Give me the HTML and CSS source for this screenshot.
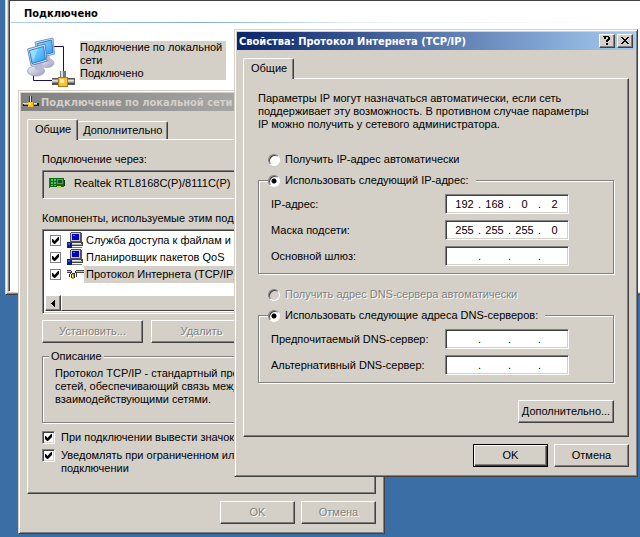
FILE: index.html
```html
<!DOCTYPE html>
<html lang="ru">
<head>
<meta charset="utf-8">
<title>Подключение по локальной сети</title>
<link rel="stylesheet" href="styles.css">
</head>
<body>
<main class="desktop">
  <section class="folder">
    <div class="folder-view">
      <h1 class="group-title">Подключено</h1>
      <div class="connection">
        <svg class="connection-icon" width="50" height="50" viewBox="0 0 50 50" aria-hidden="true">
          <defs>
            <linearGradient id="screen" x1="0" y1="0" x2="1" y2="1">
              <stop offset="0" stop-color="#8fd8ff"/><stop offset=".5" stop-color="#5cc0fb"/><stop offset="1" stop-color="#2f93ee"/>
            </linearGradient>
            <linearGradient id="stand" x1="0" y1="0" x2="1" y2="1">
              <stop offset="0" stop-color="#f4f4fb"/><stop offset="1" stop-color="#9a9bc0"/>
            </linearGradient>
            <linearGradient id="pipe" x1="0" y1="0" x2="0" y2="1">
              <stop offset="0" stop-color="#777"/><stop offset=".35" stop-color="#eee"/><stop offset="1" stop-color="#333"/>
            </linearGradient>
          </defs>
          <path d="M26 9.500H36.500V34M6.500 36V43.500H27" fill="none" stroke="#1a0f5c"/>
          <ellipse cx="20" cy="26" rx="7" ry="4.500" fill="url(#stand)" stroke="#a4a5c0" stroke-width=".8"/>
          <path d="M17 19l5-1 2 7h-7z" fill="#b5b6d0"/>
          <path d="M8 5L26 1L27.500 17L11 21Z" fill="#d4e2f4" stroke="#5d83b4" stroke-width=".8"/>
          <path d="M10 6.500L24.500 3L26 15.500L12 19Z" fill="url(#screen)" stroke="#1c67bd" stroke-width=".8"/>
          <ellipse cx="9" cy="34" rx="8.500" ry="5" fill="url(#stand)" stroke="#9596b8" stroke-width=".8"/>
          <path d="M7 26l8-2 2 8q-4 4-9 0z" fill="#b9bad6"/>
          <path d="M0.500 12L18 7L20 24L4 28.500Z" fill="#d4e2f4" stroke="#5576a4" stroke-width=".8"/>
          <path d="M2.500 13.500L16.500 9.500L18.500 22.500L5 26.500Z" fill="url(#screen)" stroke="#1c67bd" stroke-width=".8"/>
          <path d="M3 14l8-2.500-5 13z" fill="#b8e8ff" opacity=".6"/>
          <rect x="33" y="34" width="6" height="9" fill="#777"/><rect x="34" y="34" width="2" height="9" fill="#ddd"/>
          <rect x="25" y="41" width="23" height="7" fill="#555"/><rect x="25" y="42" width="22" height="5" fill="url(#pipe)"/>
          <rect x="31.500" y="40.500" width="9" height="9" fill="#f6c433" stroke="#a97b10"/><rect x="33" y="42" width="4" height="4" fill="#ffe99a"/>
        </svg>
        <p class="connection-label">Подключение по локальной<br>сети<br>Подключено</p>
      </div>
    </div>
  </section>

  <section class="window window-back" aria-label="Подключение по локальной сети">
    <header class="titlebar titlebar-inactive">
      <svg width="16" height="16" viewBox="0 0 16 16" shape-rendering="crispEdges" aria-hidden="true">
        <rect x="6" y="2" width="3" height="8" fill="#333"/><rect x="7" y="2" width="1" height="7" fill="#eee"/>
        <rect x="0" y="9" width="16" height="3" fill="#222"/><rect x="0" y="9" width="14" height="1" fill="#ddd"/><rect x="1" y="10" width="13" height="1" fill="#999"/>
        <rect x="5" y="8" width="6" height="6" fill="#b87a08"/><rect x="5" y="8" width="5" height="5" fill="#f8bf25"/><rect x="6" y="9" width="2" height="2" fill="#ffeaa0"/>
      </svg>
      <h2>Подключение по локальной сети</h2>
    </header>
    <div class="window-body">
      <div class="tabs" role="tablist">
        <button class="tab tab-active" role="tab" aria-selected="true">Общие</button>
        <button class="tab" role="tab" aria-selected="false">Дополнительно</button>
      </div>
      <div class="panel panel-connection">
        <p class="line">Подключение через:</p>
        <div class="adapter">
          <svg width="16" height="12" viewBox="0 0 16 12" shape-rendering="crispEdges" aria-hidden="true">
            <rect x="0" y="1" width="15" height="9" fill="#0b6b1c"/><rect x="0" y="1" width="1" height="10" fill="#555"/>
            <path d="M2 2h2v2h-2zM5 2h2v2h-2zM2 5h2v2h-2zM5 5h2v2h-2zM2 8h2v1h-2zM5 8h2v1h-2z" fill="#45c455"/>
            <path d="M8 2h6v5h-6z" fill="#5f9a5c"/><path d="M9 3h4v3h-4z" fill="#174f20"/><path d="M8 9h4v2h-4z" fill="#f3c52c"/><rect x="15" y="3" width="1" height="6" fill="#063d0d"/>
          </svg>
          <span>Realtek RTL8168C(P)/8111C(P) Family</span>
        </div>
        <p class="line">Компоненты, используемые этим подключением:</p>
        <div class="list">
          <label class="list-row"><input type="checkbox" class="check check-flat" checked>
            <svg class="row-icon" width="17" height="17" viewBox="0 0 17 17" shape-rendering="crispEdges" aria-hidden="true"><use href="#pc"/></svg>
            <span>Служба доступа к файлам и принтерам</span></label>
          <label class="list-row"><input type="checkbox" class="check check-flat" checked>
            <svg class="row-icon" width="17" height="17" viewBox="0 0 17 17" shape-rendering="crispEdges" aria-hidden="true">
              <g id="pc"><path d="M4 0h10v1h1v9h-12v-9h1z" fill="#555"/><path d="M4 1h9v8h-9z" fill="#c8c8c8"/><path d="M5 2h7v6h-7z" fill="#0000c8"/><path d="M6 3h2v1h-2z" fill="#4a7cff"/><path d="M3 10h12l1 1v3h-14v-3z" fill="#444"/><path d="M4 11h10v1h-10z" fill="#eee"/><path d="M4 12h11v1h-11z" fill="#aaa"/><path d="M0 10h3v1h2v5h-5z" fill="#0a1c8c"/><path d="M1 11h2v2h-2z" fill="#2c56e8"/><path d="M5 15h10v1h-10z" fill="#777"/></g>
            </svg>
            <span>Планировщик пакетов QoS</span></label>
          <label class="list-row list-row-selected"><input type="checkbox" class="check check-flat" checked>
            <svg class="row-icon" width="17" height="17" viewBox="0 0 17 17" shape-rendering="crispEdges" aria-hidden="true">
              <path d="M0 4h4v3h-4zM9 4h8v3h-8z" fill="#444"/><path d="M0 5h4v1h-4zM9 5h8v1h-8z" fill="#c4c4c4"/>
              <path d="M4 5h1v2h-1zM8 5h1v2h-1zM3 7h1v1h-1zM5 7h3v1h-3zM9 7h1v1h-1zM2 8h1v3h-1zM9 8h1v3h-1zM4 8h1v4h-1zM7 8h1v4h-1z" fill="#333"/>
              <path d="M5 8h2v5h-2z" fill="#b9a31c"/><path d="M5 9h1v2h-1z" fill="#fff17a"/>
            </svg>
            <span>Протокол Интернета (TCP/IP)</span></label>
          <div class="scrollbar">
            <button class="scroll-arrow" aria-label="Прокрутить влево"><svg width="5" height="7" viewBox="0 0 5 7" shape-rendering="crispEdges" aria-hidden="true"><path d="M4 0v7H3V6H2V5H1V4H0V3H1V2H2V1H3V0z"/></svg></button>
            <div class="scroll-thumb"></div>
          </div>
        </div>
        <div class="actions">
          <button class="btn" disabled>Установить...</button>
          <button class="btn" disabled>Удалить</button>
        </div>
        <fieldset class="group group-description">
          <legend>Описание</legend>
          <p>Протокол TCP/IP - стандартный протокол<br>сетей, обеспечивающий связь между<br>взаимодействующими сетями.</p>
        </fieldset>
        <label class="option"><input type="checkbox" class="check" checked><span>При подключении вывести значок в области</span></label>
        <label class="option"><input type="checkbox" class="check" checked><span>Уведомлять при ограниченном или<br>подключении</span></label>
      </div>
      <footer class="buttons">
        <button class="btn" disabled>OK</button>
        <button class="btn" disabled>Отмена</button>
      </footer>
    </div>
  </section>

  <section class="window window-front" role="dialog" aria-label="Свойства: Протокол Интернета (TCP/IP)">
    <header class="titlebar">
      <h2>Свойства: Протокол Интернета (TCP/IP)</h2>
      <button class="caption-btn" aria-label="Справка"><svg width="8" height="9" viewBox="0 0 8 9" shape-rendering="crispEdges" aria-hidden="true"><path d="M1 0h5v1h1v3h-1v1h-1v1h-2v-2h1v-1h1v-2h-2v2h-2v-2h-1v-1h1zM3 7h2v2h-2z"/></svg></button>
      <button class="caption-btn" aria-label="Закрыть"><svg width="8" height="7" viewBox="0 0 8 7" shape-rendering="crispEdges" aria-hidden="true"><path d="M0 0h2v1h1v1h2v-1h1v-1h2v1h-1v1h-1v1h-1v1h1v1h1v1h1v1h-2v-1h-1v-1h-2v1h-1v1h-2v-1h1v-1h1v-1h1v-1h-1v-1h-1v-1h-1z"/></svg></button>
    </header>
    <div class="window-body">
      <div class="tabs" role="tablist">
        <button class="tab tab-active" role="tab" aria-selected="true">Общие</button>
      </div>
      <div class="panel panel-ip">
        <p class="intro">Параметры IP могут назначаться автоматически, если сеть<br>поддерживает эту возможность. В противном случае параметры<br>IP можно получить у сетевого администратора.</p>
        <label class="choice"><input type="radio" class="radio" name="ip"><span>Получить IP-адрес автоматически</span></label>
        <fieldset class="group group-choice">
          <legend><label class="choice"><input type="radio" class="radio" name="ip" checked><span>Использовать следующий IP-адрес:</span></label></legend>
          <div class="field"><label for="ip1">IP-адрес:</label>
            <div class="ip"><input id="ip1" value="192"><i>.</i><input aria-label="Октет 2" value="168"><i>.</i><input aria-label="Октет 3" value="0"><i>.</i><input aria-label="Октет 4" value="2"></div></div>
          <div class="field"><label for="mask1">Маска подсети:</label>
            <div class="ip"><input id="mask1" value="255"><i>.</i><input aria-label="Октет 2" value="255"><i>.</i><input aria-label="Октет 3" value="255"><i>.</i><input aria-label="Октет 4" value="0"></div></div>
          <div class="field"><label for="gate1">Основной шлюз:</label>
            <div class="ip"><input id="gate1"><i>.</i><input aria-label="Октет 2"><i>.</i><input aria-label="Октет 3"><i>.</i><input aria-label="Октет 4"></div></div>
        </fieldset>
        <label class="choice choice-disabled"><input type="radio" class="radio" name="dns" disabled><span>Получить адрес DNS-сервера автоматически</span></label>
        <fieldset class="group group-choice">
          <legend><label class="choice"><input type="radio" class="radio" name="dns" checked><span>Использовать следующие адреса DNS-серверов:</span></label></legend>
          <div class="field"><label for="dns1">Предпочитаемый DNS-сервер:</label>
            <div class="ip"><input id="dns1"><i>.</i><input aria-label="Октет 2"><i>.</i><input aria-label="Октет 3"><i>.</i><input aria-label="Октет 4"></div></div>
          <div class="field"><label for="dns2">Альтернативный DNS-сервер:</label>
            <div class="ip"><input id="dns2"><i>.</i><input aria-label="Октет 2"><i>.</i><input aria-label="Октет 3"><i>.</i><input aria-label="Октет 4"></div></div>
        </fieldset>
        <div class="more"><button class="btn btn-wide">Дополнительно...</button></div>
      </div>
      <footer class="buttons">
        <button class="btn btn-default">OK</button>
        <button class="btn">Отмена</button>
      </footer>
    </div>
  </section>
</main>
</body>
</html>
```
FILE: styles.css
```css
* { box-sizing: border-box; }

html, body { height: 100%; }

body {
  margin: 0;
  background: #3a6ea5;
  color: #000;
  font: 11px/13px "Liberation Sans", Arial, sans-serif;
}

h1, h2, p { margin: 0; font-size: inherit; }

button, input { font: inherit; color: inherit; }

.desktop {
  position: relative;
  min-height: 100%;
  overflow: hidden;
}

/* Folder window behind the dialogs */
.folder {
  position: absolute;
  top: -4px;
  left: 5px;
  right: -4px;
  padding: 2px;
  background: #d4d0c8;
  border: 1px solid #d4d0c8;
  border-right-color: #404040;
  border-bottom-color: #404040;
  box-shadow: inset 1px 1px #fff, inset -1px -1px #808080;
}

.folder-view {
  min-height: 293px;
  background: #fff;
  border: 1px solid #808080;
  border-color: #808080 #fff #fff #808080;
  box-shadow: inset 1px 1px #404040;
  padding: 7px 0 0 2px;
}

.group-title {
  padding: 0 0 2px 13px;
  height: 16px;
  font: bold 11px/13px "DejaVu Sans Condensed", "Noto Sans", sans-serif;
  border-bottom: 1px solid;
  border-image: linear-gradient(to right, #b4cdea, #7ba9dc 30%, #e8f1fb 55%, #fff) 1;
}

.connection {
  display: flex;
  align-items: flex-start;
  gap: 3px;
  padding: 14px 0 0 16px;
}

.connection-label {
  margin-top: 4px;
  width: 146px;
  background: #d4d0c8;
  white-space: nowrap;
}

/* Dialog windows */
.window {
  position: absolute;
  padding: 2px;
  background: #d4d0c8;
  border: 1px solid #d4d0c8;
  border-right-color: #404040;
  border-bottom-color: #404040;
  box-shadow: inset 1px 1px #fff, inset -1px -1px #808080;
  white-space: nowrap;
}

.window-back { left: 18px; top: 90px; width: 367px; }
.window-front { left: 234px; top: 29px; right: 2px; }

.titlebar {
  display: flex;
  align-items: center;
  gap: 2px;
  height: 18px;
  padding: 0 2px;
  color: #fff;
  background: linear-gradient(to right, #0a246a, #a6caf0);
}

.titlebar-inactive {
  color: #d4d0c8;
  background: linear-gradient(to right, #808080, #c0c0c0);
}

.titlebar h2 {
  flex: 1;
  font: bold 11px/13px "DejaVu Sans Condensed", "Noto Sans", sans-serif;
}

.caption-btn {
  display: grid;
  place-items: center;
  width: 16px;
  height: 14px;
  padding: 0 1px 1px 0;
}

.btn, .caption-btn, .scroll-arrow {
  background: #d4d0c8;
  border: 1px solid;
  border-color: #fff #404040 #404040 #fff;
  box-shadow: inset -1px -1px #808080;
}

.window-body { padding: 8px 6px 7px; }

.tabs {
  display: flex;
  align-items: flex-end;
  height: 20px;
}

.tab {
  height: 18px;
  padding: 0 5px;
  background: #d4d0c8;
  border: 1px solid;
  border-color: #fff #404040 #fff #fff;
  border-width: 1px 1px 0 0;
  border-radius: 2px 2px 0 0;
  box-shadow: inset -1px 0 #808080;
}

.tab-active {
  position: relative;
  height: 21px;
  margin-bottom: -1px;
  padding: 0 6px 2px 7px;
  border-width: 1px 1px 0 1px;
}

.panel {
  border: 1px solid;
  border-color: #fff #404040 #404040 #fff;
  box-shadow: inset -1px -1px #808080;
}

.buttons {
  display: flex;
  justify-content: flex-end;
  gap: 6px;
  padding-top: 7px;
}

.btn {
  width: 75px;
  height: 23px;
  padding: 0 0 1px;
}

.btn:disabled { color: #808080; text-shadow: 1px 1px #fff; }
.btn-wide { width: 96px; }

.btn-default {
  border-color: #000;
  box-shadow: inset 1px 1px #fff, inset -1px -1px #404040, inset -2px -2px #808080;
}

/* Check boxes and radio buttons */
.check {
  appearance: none;
  flex: none;
  width: 13px;
  height: 13px;
  margin: 0;
  background: #fff;
  border: 1px solid;
  border-color: #808080 #fff #fff #808080;
  box-shadow: inset 1px 1px #404040, inset -1px -1px #d4d0c8;
}

.check:checked::before {
  content: "";
  display: block;
  width: 7px;
  height: 7px;
  margin: 2px;
  background: #000;
  clip-path: polygon(0 29%, 0 72%, 29% 100%, 43% 100%, 100% 43%, 100% 0, 86% 0, 36% 58%, 14% 29%);
}

.check-flat {
  width: 11px;
  height: 11px;
  border-color: #808080;
  box-shadow: none;
}

.check-flat:checked::before { margin: 1px; }

.radio {
  appearance: none;
  flex: none;
  width: 12px;
  height: 12px;
  margin: 0;
  background: #fff;
  border: 1px solid;
  border-color: #808080 #fff #fff #808080;
  border-radius: 50%;
  box-shadow: inset 1px 1px #404040;
}

.radio:checked { background: radial-gradient(circle at 5px 5px, #000 2px, #fff 3px); }
.radio:disabled { background: #d4d0c8; }

.choice {
  display: flex;
  align-items: center;
  gap: 5px;
}

.choice-disabled { color: #808080; text-shadow: 1px 1px #fff; }

.group {
  min-width: 0;
  margin: 0;
  padding: 0;
  border: 1px solid #808080;
  box-shadow: 1px 1px #fff, inset 1px 1px #fff;
}

.group legend { background: #d4d0c8; }

/* Connection properties */
.panel-connection { padding: 13px 14px; }

.line { height: 17px; }

.adapter {
  display: flex;
  align-items: center;
  gap: 9px;
  height: 29px;
  margin-bottom: 13px;
  padding: 0 6px 3px;
  border: 1px solid;
  border-color: #808080 #fff #fff #808080;
  box-shadow: inset 1px 1px #404040;
}

.list {
  height: 85px;
  padding: 2px;
  display: flex;
  flex-direction: column;
  background: #fff;
  border: 1px solid;
  border-color: #808080 #fff #fff #808080;
  box-shadow: inset 1px 1px #404040, inset -1px -1px #d4d0c8;
}

.list-row {
  display: flex;
  align-items: center;
  height: 17px;
  padding-left: 5px;
  overflow: hidden;
}

.row-icon { margin-left: 6px; flex: none; }
.list-row span { padding: 2px; }
.list-row-selected span { background: #d4d0c8; }

.scrollbar {
  display: flex;
  height: 16px;
  margin-top: auto;
}

.scroll-arrow {
  display: grid;
  place-items: center;
  width: 16px;
  padding: 0;
}

.scroll-thumb {
  flex: 1;
  background: #d4d0c8;
  border: 1px solid;
  border-color: #fff #404040 #404040 #fff;
}

.actions {
  display: flex;
  gap: 8px;
  margin: 6px 0 7px;
}

.actions .btn { width: 101px; }

.group-description {
  margin-bottom: 8px;
  padding: 4px 12px 16px;
}

.group-description legend { padding: 0 2px; margin-left: -6px; }

.option {
  display: flex;
  gap: 6px;
  margin-bottom: 5px;
}

/* TCP/IP properties */
.panel-ip { padding: 13px 14px; }
.intro { margin-bottom: 22px; }

.panel-ip > .choice { padding-left: 10px; margin-bottom: 8px; }

.group-choice {
  display: grid;
  gap: 6px;
  margin-bottom: 14px;
  padding: 7px 44px 7px 12px;
}

.group-choice legend { margin-left: -3px; padding: 0 7px 0 0; }

.field {
  display: flex;
  align-items: center;
  justify-content: space-between;
}

.ip {
  display: flex;
  align-items: center;
  width: 124px;
  height: 20px;
  padding-left: 6px;
  background: #fff;
  border: 1px solid;
  border-color: #808080 #fff #fff #808080;
  box-shadow: inset 1px 1px #404040, inset -1px -1px #d4d0c8;
}

.ip input {
  width: 25px;
  padding: 0;
  border: 0;
  outline: 0;
  background: transparent;
  text-align: center;
}

.ip i {
  width: 5px;
  font-style: normal;
  text-align: center;
}

.more {
  display: flex;
  justify-content: flex-end;
  padding-top: 3px;
}
```
